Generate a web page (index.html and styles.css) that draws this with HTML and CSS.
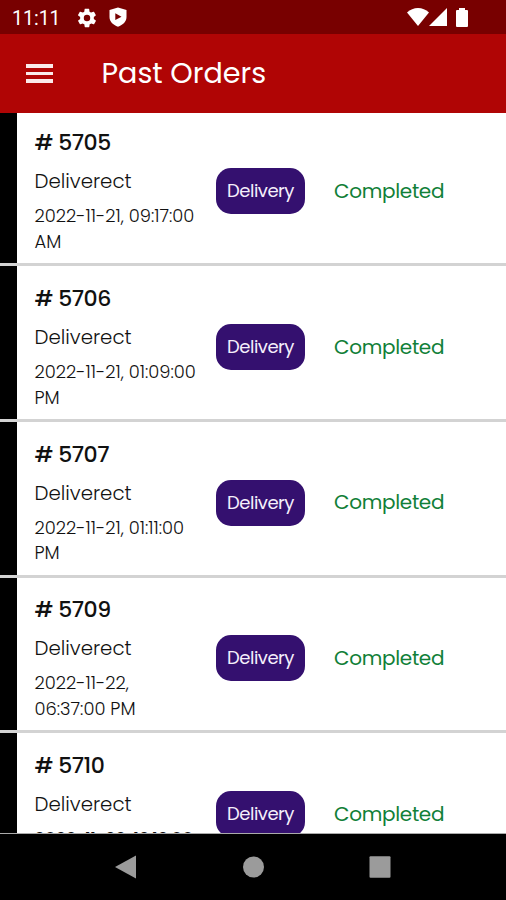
FILE: index.html
```html
<!DOCTYPE html>
<html lang="en">
<head>
    <meta charset="UTF-8">
    <meta name="viewport" content="width=device-width, initial-scale=1.0">
    <title>Past Orders</title>
    <link rel="stylesheet" href="styles.css">
</head>
<body>
    <div class="status-bar">
        <span class="clock">11:11</span>
        <svg class="gear" width="22" height="22" viewBox="0 0 24 24"><path fill="#fff" fill-rule="evenodd" d="M19.4 13c0-.3.1-.6.1-1s0-.7-.1-1l2.1-1.6c.2-.2.3-.4.1-.7l-2-3.4c-.1-.2-.4-.3-.6-.2l-2.5 1c-.5-.4-1.1-.7-1.7-1l-.4-2.6c0-.3-.2-.5-.5-.5h-4c-.2 0-.4.2-.5.4l-.4 2.7c-.6.3-1.1.6-1.7 1l-2.5-1c-.2-.1-.5 0-.6.2l-2 3.4c-.1.3 0 .5.2.7L4.6 11c-.1.3-.1.7-.1 1s0 .7.1 1l-2.2 1.6c-.2.2-.3.5-.1.7l2 3.4c.1.2.4.3.6.2l2.5-1c.5.4 1.1.8 1.7 1l.4 2.7c0 .2.2.4.5.4h4c.3 0 .5-.2.5-.4l.4-2.7c.6-.2 1.2-.6 1.7-1l2.5 1c.2.1.5 0 .6-.2l2-3.4c.1-.2.1-.5-.1-.7zM12 15.5a3.5 3.5 0 1 1 0-7 3.5 3.5 0 0 1 0 7z"/></svg>
        <svg class="shield" width="18" height="20" viewBox="0 0 18 20"><path fill="#fff" fill-rule="evenodd" d="M9 .5 17.5 3v7c0 4.5-3.5 8-8.500 9.700C4 18 .5 14.5.5 10V3zM6.300 6.300v6.800L12.500 9.700z"/></svg>
        <div class="signals">
            <svg width="22" height="18" viewBox="0 0 22 18"><path fill="#fff" d="M0 4.5Q4.8 0 11 0t11 4.5L11 18z"/></svg>
            <svg width="18" height="18" viewBox="0 0 18 18"><path fill="#fff" d="M18 0v18H0z"/></svg>
            <svg class="battery" width="12" height="19" viewBox="0 0 12 19"><path fill="#fff" d="M3 0h6v2h2q1 0 1 1v15q0 1-1 1H1q-1 0-1-1V3q0-1 1-1h2z"/></svg>
        </div>
    </div>

    <header class="app-bar">
        <div class="menu"><span></span><span></span><span></span></div>
        <h1>Past Orders</h1>
    </header>

    <main class="orders">
        <div class="order">
            <div class="info">
                <h2># 5705</h2>
                <p class="source">Deliverect</p>
                <p class="date">2022-11-21, 09:17:00<br>AM</p>
            </div>
            <span class="type">Delivery</span>
            <span class="state">Completed</span>
        </div>
        <div class="order">
            <div class="info">
                <h2># 5706</h2>
                <p class="source">Deliverect</p>
                <p class="date">2022-11-21, 01:09:00<br>PM</p>
            </div>
            <span class="type">Delivery</span>
            <span class="state">Completed</span>
        </div>
        <div class="order">
            <div class="info">
                <h2># 5707</h2>
                <p class="source">Deliverect</p>
                <p class="date">2022-11-21, 01:11:00<br>PM</p>
            </div>
            <span class="type">Delivery</span>
            <span class="state">Completed</span>
        </div>
        <div class="order">
            <div class="info">
                <h2># 5709</h2>
                <p class="source">Deliverect</p>
                <p class="date">2022-11-22,<br>06:37:00 PM</p>
            </div>
            <span class="type">Delivery</span>
            <span class="state">Completed</span>
        </div>
        <div class="order">
            <div class="info">
                <h2># 5710</h2>
                <p class="source">Deliverect</p>
                <p class="date">2022-11-22, 12:12:00</p>
            </div>
            <span class="type">Delivery</span>
            <span class="state">Completed</span>
        </div>
    </main>

    <nav class="nav-bar">
        <svg width="22" height="24" viewBox="0 0 22 24"><path fill="#9b9b9b" d="M21 .5v23L0 12z"/></svg>
        <svg width="22" height="22" viewBox="0 0 22 22"><circle cx="11.5" cy="11" r="10.5" fill="#9b9b9b"/></svg>
        <svg width="22" height="22" viewBox="0 0 22 22"><rect x=".5" y=".3" width="21" height="21.4" rx="1" fill="#9b9b9b"/></svg>
    </nav>
</body>
</html>
```

FILE: styles.css
```css
* {
    box-sizing: border-box;
}
body {
    margin: 0;
    height: 900px;
    display: flex;
    flex-direction: column;
    overflow: hidden;
    background-color: #fff;
    font-family: Poppins, Inter, "Liberation Sans", sans-serif;
    color: #111;
}
h1, h2, p {
    margin: 0;
    font-weight: 400;
    white-space: nowrap;
}
.status-bar {
    height: 34px;
    flex: none;
    display: flex;
    align-items: center;
    padding: 1px 38px 0 12px;
    background-color: #780000;
    color: #fff;
}
.clock {
    width: 64px;
    padding-top: 1px;
    font-family: Roboto, sans-serif;
    font-size: 19.5px;
}
.shield {
    margin: -1px 0 0 11px;
}
.signals {
    display: flex;
    align-items: center;
    margin: -1px 0 0 auto;
}
.battery {
    margin-left: 9px;
}
.app-bar {
    height: 79px;
    flex: none;
    display: flex;
    align-items: center;
    padding-left: 26px;
    background-color: #b00505;
    color: #fff;
}
.menu {
    width: 27px;
    margin-right: 48.5px;
    display: flex;
    flex-direction: column;
    gap: 4px;
}
.menu span {
    height: 3.6px;
    background-color: #fbeaea;
}
h1 {
    font-size: 28.6px;
}
.orders {
    flex: 1;
    min-height: 0;
    overflow: hidden;
    border-bottom: 1px solid #aaa;
}
.order {
    height: 155.7px;
    display: flex;
    align-items: center;
    border-bottom: 3px solid #d3d3d3;
}
.order:first-child {
    margin-top: -2.4px;
}
.info {
    width: 216px;
    height: 100%;
    padding: 13.6px 0 0 17.5px;
    border-left: 17px solid #000;
}
h2 {
    font-size: 22px;
    font-weight: 500;
    letter-spacing: -0.55px;
    line-height: 38px;
}
.source {
    font-size: 19.8px;
    font-weight: 300;
    line-height: 38px;
}
.date {
    padding-top: 3.1px;
    font-size: 17.9px;
    font-weight: 300;
    line-height: 25.7px;
}
.type {
    width: 89px;
    height: 46px;
    margin-top: 8.4px;
    border-radius: 15px;
    background-color: #34106f;
    color: #f4effb;
    font-size: 18px;
    letter-spacing: -0.5px;
    line-height: 46px;
    text-align: center;
}
.state {
    margin: 8px 0 0 29px;
    color: #118038;
    font-size: 20px;
    letter-spacing: -0.3px;
}
.nav-bar {
    height: 66px;
    flex: none;
    display: flex;
    align-items: center;
    justify-content: center;
    gap: 105px;
    background-color: #000;
}
```
